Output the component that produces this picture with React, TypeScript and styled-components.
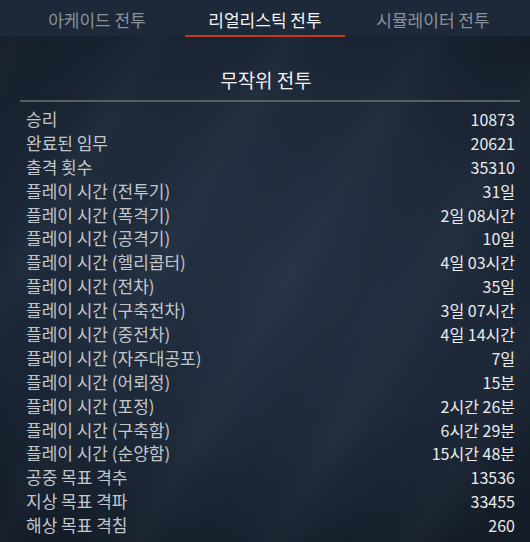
import React from "react";
import styled, { createGlobalStyle } from "styled-components";

const Global = createGlobalStyle`
  html, body { margin: 0; padding: 0; background: #131b26; }
  body { font-family: "Noto Sans CJK KR", "Noto Sans", sans-serif; }
`;

const Page = styled.div`
  width: 530px;
  min-height: 542px;
  overflow: hidden;
  background:
    repeating-linear-gradient(
      120deg,
      rgba(255, 255, 255, 0) 0px,
      rgba(255, 255, 255, 0.018) 30px,
      rgba(255, 255, 255, 0) 60px,
      rgba(0, 0, 0, 0.03) 90px,
      rgba(255, 255, 255, 0) 120px
    ),
    radial-gradient(ellipse 75% 60% at 50% 50%, #243244 0%, #1e2a3a 55%, #141c28 100%);
`;

const TabBar = styled.div`
  height: 36px;
  background: #1d2939;
  display: flex;
  justify-content: center;
`;

const Tab = styled.div<{ $active?: boolean }>`
  position: relative;
  width: 168px;
  text-align: center;
  font-size: 17px;
  line-height: 39px;
  color: ${(p) => (p.$active ? "#f4f4f4" : "#8b929b")};
  &::after {
    content: "";
    display: ${(p) => (p.$active ? "block" : "none")};
    position: absolute;
    left: 4px;
    right: 4px;
    bottom: -1px;
    height: 2px;
    background: #c23a1e;
  }
`;

const Content = styled.div`
  padding: 0 10px 0 20px;
`;

const Title = styled.div`
  box-sizing: border-box;
  text-align: center;
  font-size: 19px;
  color: #f0f0f0;
  padding: 28px 8px 4px 0;
  line-height: 32px;
  width: 500px;
`;

const Divider = styled.div`
  width: 500px;
  height: 2px;
  background: #5a5e63;
`;

const List = styled.div`
  width: 500px;
  padding: 5px 0 0;
`;

const Row = styled.div`
  display: flex;
  justify-content: space-between;
  align-items: baseline;
  padding: 0 5px 0 6px;
  height: 23.9px;
  line-height: 23.9px;
`;

const Label = styled.span`
  font-size: 17px;
  color: #c3c7cc;
`;

const Value = styled.span`
  font-size: 16px;
  color: #ebebeb;
`;

const rows: [string, string][] = [
  ["승리", "10873"],
  ["완료된 임무", "20621"],
  ["출격 횟수", "35310"],
  ["플레이 시간 (전투기)", "31일"],
  ["플레이 시간 (폭격기)", "2일 08시간"],
  ["플레이 시간 (공격기)", "10일"],
  ["플레이 시간 (헬리콥터)", "4일 03시간"],
  ["플레이 시간 (전차)", "35일"],
  ["플레이 시간 (구축전차)", "3일 07시간"],
  ["플레이 시간 (중전차)", "4일 14시간"],
  ["플레이 시간 (자주대공포)", "7일"],
  ["플레이 시간 (어뢰정)", "15분"],
  ["플레이 시간 (포정)", "2시간 26분"],
  ["플레이 시간 (구축함)", "6시간 29분"],
  ["플레이 시간 (순양함)", "15시간 48분"],
  ["공중 목표 격추", "13536"],
  ["지상 목표 격파", "33455"],
  ["해상 목표 격침", "260"],
];

export default function App() {
  return (
    <Page>
      <Global />
      <TabBar>
        <Tab>아케이드 전투</Tab>
        <Tab $active>리얼리스틱 전투</Tab>
        <Tab>시뮬레이터 전투</Tab>
      </TabBar>
      <Content>
        <Title>무작위 전투</Title>
        <Divider />
        <List>
          {rows.map(([l, v]) => (
            <Row key={l}>
              <Label>{l}</Label>
              <Value>{v}</Value>
            </Row>
          ))}
        </List>
      </Content>
    </Page>
  );
}
